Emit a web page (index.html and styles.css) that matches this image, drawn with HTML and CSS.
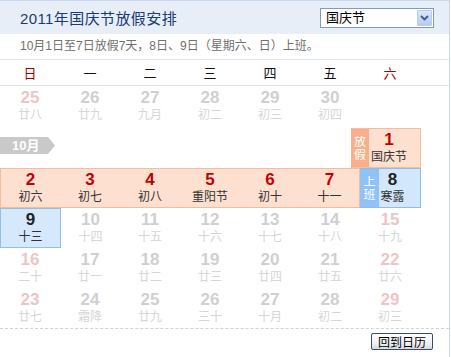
FILE: index.html
```html
<!DOCTYPE html>
<html lang="zh">
<head>
<meta charset="utf-8">
<title>2011年国庆节放假安排</title>
<link rel="stylesheet" href="styles.css">
</head>
<body>
<div class="cal">
  <div class="head">
    <h1 class="title">2011年国庆节放假安排</h1>
    <div class="select">
      <span class="select-text">国庆节</span>
      <span class="select-btn"><svg width="9" height="6" viewBox="0 0 9 6"><path d="M1 1 L4.5 4.5 L8 1" fill="none" stroke="#3f5a88" stroke-width="1.8"/></svg></span>
    </div>
  </div>
  <div class="info">10月1日至7日放假7天，8日、9日（星期六、日）上班。</div>
  <div class="week">
    <span class="wd we">日</span><span class="wd">一</span><span class="wd">二</span><span class="wd">三</span><span class="wd">四</span><span class="wd">五</span><span class="wd we">六</span>
  </div>

  <div class="row">
    <div class="cell off wkd"><b>25</b><i>廿八</i></div>
    <div class="cell off"><b>26</b><i>廿九</i></div>
    <div class="cell off"><b>27</b><i>九月</i></div>
    <div class="cell off"><b>28</b><i>初二</i></div>
    <div class="cell off"><b>29</b><i>初三</i></div>
    <div class="cell off"><b>30</b><i>初四</i></div>
  </div>

  <div class="row month-row">
    <div class="month-tag">10月</div>
    <div class="holiday first">
      <span class="tag tag-off"><span>放</span><span>假</span></span>
      <div class="hcell"><b>1</b><i>国庆节</i></div>
    </div>
  </div>

  <div class="row">
    <div class="band">
      <div class="cell hol"><b>2</b><i>初六</i></div>
      <div class="cell hol"><b>3</b><i>初七</i></div>
      <div class="cell hol"><b>4</b><i>初八</i></div>
      <div class="cell hol"><b>5</b><i>重阳节</i></div>
      <div class="cell hol"><b>6</b><i>初十</i></div>
      <div class="cell hol"><b>7</b><i>十一</i></div>
    </div>
    <div class="work">
      <span class="tag tag-work"><span>上</span><span>班</span></span>
      <div class="wcell"><b>8</b><i>寒露</i></div>
    </div>
  </div>

  <div class="row">
    <div class="cell sel"><b>9</b><i>十三</i></div>
    <div class="cell off"><b>10</b><i>十四</i></div>
    <div class="cell off"><b>11</b><i>十五</i></div>
    <div class="cell off"><b>12</b><i>十六</i></div>
    <div class="cell off"><b>13</b><i>十七</i></div>
    <div class="cell off"><b>14</b><i>十八</i></div>
    <div class="cell off wkd"><b>15</b><i>十九</i></div>
  </div>
  <div class="row">
    <div class="cell off wkd"><b>16</b><i>二十</i></div>
    <div class="cell off"><b>17</b><i>廿一</i></div>
    <div class="cell off"><b>18</b><i>廿二</i></div>
    <div class="cell off"><b>19</b><i>廿三</i></div>
    <div class="cell off"><b>20</b><i>廿四</i></div>
    <div class="cell off"><b>21</b><i>廿五</i></div>
    <div class="cell off wkd"><b>22</b><i>廿六</i></div>
  </div>
  <div class="row">
    <div class="cell off wkd"><b>23</b><i>廿七</i></div>
    <div class="cell off"><b>24</b><i>霜降</i></div>
    <div class="cell off"><b>25</b><i>廿九</i></div>
    <div class="cell off"><b>26</b><i>三十</i></div>
    <div class="cell off"><b>27</b><i>十月</i></div>
    <div class="cell off"><b>28</b><i>初二</i></div>
    <div class="cell off wkd"><b>29</b><i>初三</i></div>
  </div>

  <div class="foot">
    <button class="back">回到日历</button>
  </div>
</div>
</body>
</html>
```

FILE: styles.css
```css
html, body {
  margin: 0;
  padding: 0;
  background: #fff;
}
body {
  font-family: "Liberation Sans", "Noto Sans CJK SC", sans-serif;
  font-size: 12px;
  color: #333;
}
.cal {
  width: 449px;
  height: 357px;
  border-top: 1px solid #c6d9ef;
  border-right: 1px solid #c6d9ef;
  box-sizing: content-box;
}
.head {
  height: 33px;
  background: #e7eef8;
  display: flex;
  align-items: center;
  justify-content: space-between;
  padding: 0 15px 0 20px;
}
.title {
  margin: 0;
  font-size: 15px;
  font-weight: normal;
  color: #1b3a72;
  letter-spacing: 0.4px;
  font-family: "Liberation Sans", "Noto Sans CJK SC", sans-serif;
}
.select {
  width: 114px;
  height: 20px;
  box-sizing: border-box;
  border: 1px solid #7f9db9;
  background: #fff;
  display: flex;
  align-items: center;
  justify-content: space-between;
  padding: 1px;
}
.select-text {
  font-size: 13px;
  color: #000;
  padding-left: 4px;
  line-height: 16px;
}
.select-btn {
  width: 15px;
  height: 16px;
  box-sizing: border-box;
  border: 1px solid #b9cdee;
  background: linear-gradient(#dbe6fb, #b4cbf2);
  display: flex;
  align-items: center;
  justify-content: center;
  border-radius: 1px;
}
.info {
  height: 25px;
  line-height: 25px;
  padding-left: 20px;
  color: #707070;
  font-size: 12px;
  border-bottom: 1px solid #dce3ec;
}
.week {
  height: 25px;
  display: flex;
  align-items: center;
  border-bottom: 1px solid #dce3ec;
}
.wd {
  width: 60px;
  text-align: center;
  font-size: 13px;
  color: #111;
}
.wd.we {
  color: #a90000;
}
.row {
  display: flex;
  height: 40px;
}
.cell {
  width: 60px;
  height: 40px;
  box-sizing: border-box;
  text-align: center;
  padding-top: 3px;
}
.cell b, .hcell b, .wcell b {
  display: block;
  font-family: "Liberation Sans", sans-serif;
  font-weight: bold;
  font-size: 17px;
  line-height: 17px;
}
.cell i, .hcell i, .wcell i {
  display: block;
  font-style: normal;
  font-size: 12px;
  line-height: 19px;
  white-space: nowrap;
}
.off b { color: #d0d0d0; }
.off i { color: #d6d6d6; }
.off.wkd b { color: #ecc6c6; }
.month-row {
  height: 42px;
  justify-content: space-between;
  align-items: flex-start;
}
.month-tag {
  margin-top: 11px;
  width: 55px;
  height: 17px;
  background: #c9c9c9;
  color: #fff;
  font-weight: bold;
  font-size: 13px;
  line-height: 17px;
  padding-left: 12px;
  box-sizing: border-box;
  clip-path: polygon(0 0, 48px 0, 55px 50%, 48px 100%, 0 100%);
}
.holiday {
  align-self: flex-end;
  margin-right: 28px;
  display: flex;
  height: 40px;
  border: 1px solid #f5bd9f;
  border-left: none;
  box-sizing: border-box;
  background: #fde0d0;
}
.tag {
  display: flex;
  flex-direction: column;
  align-items: center;
  justify-content: center;
  color: #fff;
  font-size: 12px;
  line-height: 12px;
  gap: 1px;
  overflow: hidden;
}
.tag span {
  display: block;
  height: 12px;
  overflow: hidden;
}
.tag-off {
  width: 18px;
  background: #fbae8c;
}
.hcell {
  width: 38px;
  padding-top: 2px;
  text-align: center;
  margin-left: 1px;
  margin-right: 12px;
}
.hcell b { color: #c40000; }
.hcell i { color: #333; }
.band {
  width: 360px;
  height: 40px;
  display: flex;
  background: #fde0d0;
  border: 1px solid #f5bd9f;
  box-sizing: border-box;
}
.band .cell {
  height: 38px;
  padding-top: 2px;
}
.band .cell:first-child { width: 59px; }
.band .cell:last-child { width: 59px; }
.hol b { color: #c40000; }
.hol i { color: #333; }
.work {
  width: 61px;
  height: 40px;
  display: flex;
  background: #d3e7fc;
  border: 1px solid #8ebde8;
  border-left: none;
  box-sizing: border-box;
}
.tag-work {
  width: 19px;
  background: #8fc3f7;
}
.wcell {
  width: 25px;
  margin-left: 1px;
  padding-top: 2px;
  text-align: center;
}
.wcell b { color: #222; }
.wcell i { color: #333; }
.sel {
  width: 61px;
  background: #d5e8fc;
  border: 1px solid #93c0ea;
  padding-top: 2px;
}
.sel b { color: #222; }
.sel i { color: #333; }
.row .sel + .cell { width: 59px; }
.foot {
  border-top: 1px dashed #d2d2d2;
  display: flex;
  justify-content: flex-end;
  padding: 4px 16px 0 0;
}
.back {
  width: 62px;
  height: 17px;
  padding: 0;
  margin: 0;
  font-family: "Noto Sans CJK SC", sans-serif;
  font-size: 12px;
  line-height: 15px;
  color: #000;
  border: 1px solid #3d4c66;
  border-radius: 2px;
  background: linear-gradient(#ffffff, #f2f2f6 60%, #d6d8e2);
}
```
